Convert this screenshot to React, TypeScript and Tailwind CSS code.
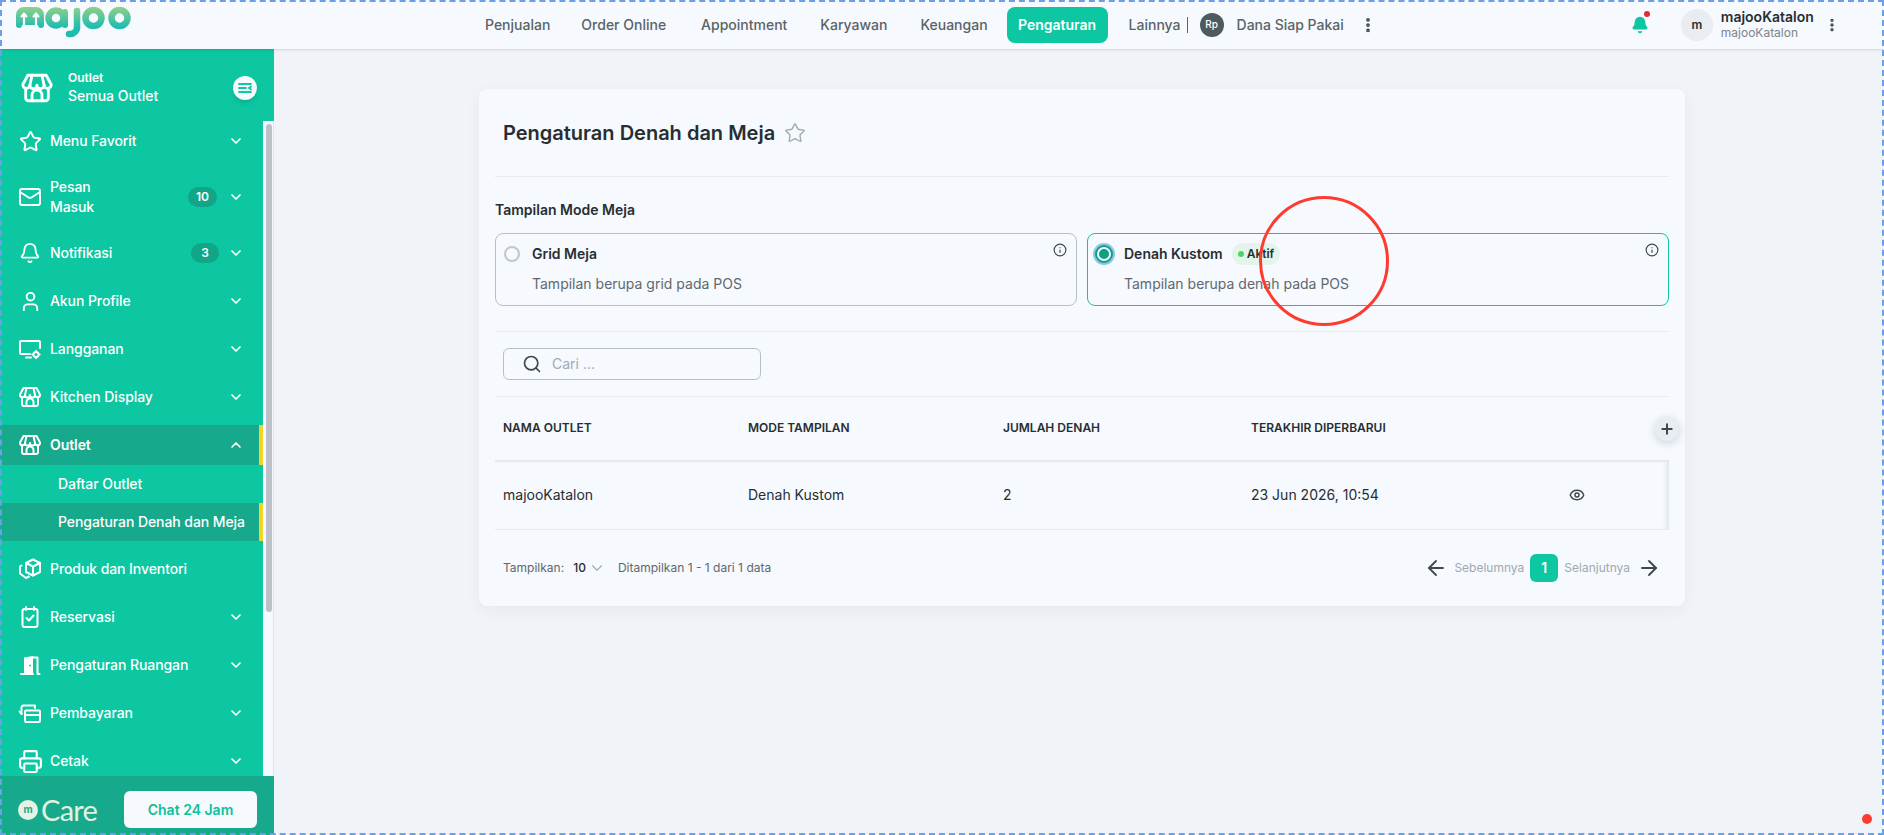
import { useState } from 'react'
import {
    Star, Mail, Bell, User, ChevronDown, ChevronUp, Search, Info, Eye, Plus,
    ArrowLeft, ArrowRight, EllipsisVertical, Printer,
} from 'lucide-react'

const navItems = [
    { label: 'Penjualan', offset: '' },
    { label: 'Order Online', offset: '-ml-[2px]' },
    { label: 'Appointment', offset: 'ml-[2px]' },
    { label: 'Karyawan', offset: '' },
    { label: 'Keuangan', offset: '' },
]

function Logo() {
    return (
        <svg width="118" height="40" viewBox="0 -2 118 40" fill="none" className="shrink-0">
            <defs>
                <linearGradient id="logoGrad" gradientUnits="userSpaceOnUse" x1="0" y1="0" x2="0" y2="20">
                    <stop offset="0" stopColor="#93cf88" />
                    <stop offset="1" stopColor="#1fbdb0" />
                </linearGradient>
            </defs>
            <path d="M1 18V8a8 8 0 0 1 8-8h12a8 8 0 0 1 8 8v10a3 3 0 0 1-6 0h-16a3 3 0 0 1-6 0z" fill="url(#logoGrad)" />
            <path d="M9 22V6.5M6.5 9.5 9 6.5l2.5 3M21 22V6.5M18.5 9.5 21 6.5l2.5 3" stroke="#f6f9fe" strokeWidth="2.2" strokeLinecap="round" strokeLinejoin="round" />
            <g stroke="url(#logoGrad)" strokeLinecap="round" strokeLinejoin="round">
                <circle cx="41" cy="11" r="7.5" strokeWidth="6.5" />
                <path d="M50 5v13" strokeWidth="6" />
                <path d="M62 4v15a7 7 0 0 1-8 8" strokeWidth="6.5" />
                <circle cx="78.5" cy="11" r="8" strokeWidth="6.5" />
                <circle cx="104.5" cy="11" r="8" strokeWidth="6.5" />
            </g>
        </svg>
    )
}

function StoreIcon({ size = 24 }: { size?: number }) {
    return (
        <svg width={size} height={size} viewBox="0 0 24 24" fill="none" stroke="currentColor" strokeWidth="2" strokeLinecap="round" strokeLinejoin="round" className="shrink-0">
            <path d="M5.5 3h13l3.5 6.5a2.5 2.5 0 0 1-5 .5 2.5 2.5 0 0 1-5 0 2.5 2.5 0 0 1-5 0 2.5 2.5 0 0 1-5-.5z" />
            <path d="M8.5 3 7 10M15.5 3 17 10" />
            <path d="M4 12.5V19a2 2 0 0 0 2 2h12a2 2 0 0 0 2-2v-6.5" />
            <path d="M8.5 21v-4a3.5 3.5 0 0 1 7 0v4" />
        </svg>
    )
}

function MonitorGearIcon() {
    return (
        <svg width="24" height="24" viewBox="0 0 24 24" fill="none" stroke="currentColor" strokeWidth="2" strokeLinecap="round" strokeLinejoin="round" className="shrink-0">
            <path d="M22 11V5a1 1 0 0 0-1-1H3a1 1 0 0 0-1 1v11a1 1 0 0 0 1 1h9" />
            <path d="M8 20.5h5" />
            <circle cx="18" cy="17.5" r="2.6" />
            <path d="M18 13.5v1M18 20.5v1M14 17.5h1M21 17.5h1" strokeWidth="1.6" />
        </svg>
    )
}

function CubeIcon() {
    return (
        <svg width="24" height="24" viewBox="0 0 24 24" fill="none" stroke="currentColor" strokeWidth="2" strokeLinecap="round" strokeLinejoin="round" className="shrink-0">
            <path d="M15 2.5 22 6v9l-7 3.5L8 15V6z" />
            <path d="M8 6l7 3.5L22 6M15 9.5v9" />
            <path d="M3.5 8.5 2 9.5v7l6 4.5 3-1.5" />
        </svg>
    )
}

function ReservasiIcon() {
    return (
        <svg width="24" height="24" viewBox="0 0 24 24" fill="none" stroke="currentColor" strokeWidth="2" strokeLinecap="round" strokeLinejoin="round" className="shrink-0">
            <rect x="4.5" y="4" width="15" height="18" rx="2" />
            <path d="M8 2v3M16 2v3" />
            <path d="M8.5 13l2.5 2.5 4.5-5" />
        </svg>
    )
}

function DoorIcon() {
    return (
        <svg width="24" height="24" viewBox="0 0 24 24" fill="none" className="shrink-0">
            <path d="M6 21V4.5L15 3v18z" fill="currentColor" />
            <path d="M15 4.5h4.5V21h2M3 21h12" stroke="currentColor" strokeWidth="2" strokeLinecap="round" strokeLinejoin="round" />
            <circle cx="12" cy="12.5" r="0.9" fill="#0cc7a1" />
        </svg>
    )
}

function PaymentIcon() {
    return (
        <svg width="24" height="24" viewBox="0 0 24 24" fill="none" stroke="currentColor" strokeWidth="2" strokeLinecap="round" strokeLinejoin="round" className="shrink-0">
            <rect x="7" y="9.5" width="15" height="11.5" rx="1" />
            <path d="M7 14h15" />
            <path d="M3.5 13V6.5a2 2 0 0 1 2-2H17v2.5" />
            <path d="M1.5 10.5 3.5 13" />
        </svg>
    )
}

function MenuRow({ icon, label, badge, open, active, noChevron, tall }: {
    icon: React.ReactNode
    label: string
    badge?: string
    open?: boolean
    active?: boolean
    noChevron?: boolean
    tall?: boolean
}) {
    return (
        <div className={`flex items-center pl-5 shrink-0 ${tall ? 'h-14' : 'h-10'} ${active ? 'bg-[#17a98b] border-r-4 border-[#f4d423] pr-[14px]' : 'pr-[18px]'}`}>
            <div className="w-5 h-5 flex items-center justify-center text-white shrink-0">{icon}</div>
            <span className={`ml-[10px] text-sm leading-5 tracking-[-0.08px] text-white flex-1 ${active ? 'font-semibold' : 'font-medium'} ${tall ? 'max-w-[60px]' : ''}`}>{label}</span>
            {tall && <span className="flex-1" />}
            {badge && (
                <span className={`h-5 px-2 min-w-7 rounded-full bg-[#10a687] text-white text-xs font-semibold flex items-center justify-center ${badge === '3' ? 'mr-[8px]' : 'mr-[10px]'}`}>{badge}</span>
            )}
            {!noChevron && (open
                ? <ChevronUp size={16} strokeWidth={2.5} className="ml-[1px] mr-[1px] text-white shrink-0" />
                : <ChevronDown size={16} strokeWidth={2.5} className="ml-[1px] mr-[1px] text-white shrink-0" />)}
        </div>
    )
}

function Sidebar() {
    return (
        <aside className="w-[274px] shrink-0 bg-[#0cc7a1] flex flex-col overflow-hidden relative">
            <div className="h-[72px] shrink-0 flex items-center pt-[6px] pl-5 pr-[17px]">
                <span className="text-white"><StoreIcon size={34} /></span>
                <div className="ml-[14px] flex-1 text-white">
                    <div className="text-xs font-semibold leading-4">Outlet</div>
                    <div className="text-sm font-medium leading-5">Semua Outlet</div>
                </div>
                <div className="w-6 h-6 rounded-full bg-[#f6f9fe] shadow-md flex items-center justify-center">
                    <svg width="14" height="12" viewBox="0 0 14 12" fill="none" stroke="#0cc7a1" strokeWidth="1.8" strokeLinecap="round">
                        <path d="M1 2h12M1 6h7M1 10h12M13 4.5 11 6l2 1.5" />
                    </svg>
                </div>
            </div>
            <div className="flex-1 flex min-h-0">
                <nav className="w-[263px] shrink-0 flex flex-col gap-2 overflow-hidden">
                    <MenuRow icon={<Star size={23} className="shrink-0" />} label="Menu Favorit" />
                    <MenuRow icon={<Mail size={24} className="shrink-0" />} label="Pesan Masuk" badge="10" tall />
                    <MenuRow icon={<Bell size={22} className="shrink-0" />} label="Notifikasi" badge="3" />
                    <MenuRow icon={<User size={23} className="shrink-0" />} label="Akun Profile" />
                    <MenuRow icon={<MonitorGearIcon />} label="Langganan" />
                    <MenuRow icon={<StoreIcon />} label="Kitchen Display" />
                    <div className="shrink-0">
                        <MenuRow icon={<StoreIcon />} label="Outlet" open active />
                        <div className="h-[38px] pl-[58px] flex items-center text-sm font-medium tracking-[-0.08px] text-white">Daftar Outlet</div>
                        <div className="h-[38px] pl-[58px] flex items-center text-sm font-medium tracking-[-0.08px] text-white bg-[#17a98b] border-r-4 border-[#f4d423]">Pengaturan Denah dan Meja</div>
                    </div>
                    <MenuRow icon={<CubeIcon />} label="Produk dan Inventori" noChevron />
                    <MenuRow icon={<ReservasiIcon />} label="Reservasi" />
                    <MenuRow icon={<DoorIcon />} label="Pengaturan Ruangan" />
                    <MenuRow icon={<PaymentIcon />} label="Pembayaran" />
                    <MenuRow icon={<Printer size={25} className="shrink-0" />} label="Cetak" />
                </nav>
                <div className="flex-1 bg-[#f6f9fe] border-r border-[#dfe3ea] pl-[3px] pt-[3px]">
                    <div className="w-[6px] h-[488px] rounded-full bg-[#bcc1c9]" />
                </div>
            </div>
            <div className="h-[59px] shrink-0 bg-[#17a98b] flex items-center pt-2 pl-[18px] pr-[17px]">
                <span className="w-5 h-5 rounded-full bg-[#e6f2e4] flex items-center justify-center text-[10px] font-bold text-[#17a98b]">m</span>
                <span className="ml-[3px] flex-1 text-[29px] leading-none tracking-tight text-[#e3f1e1] font-['Lato']">Care</span>
                <button className="w-[133px] h-[37px] rounded-md bg-[#f6f9fe] text-sm font-semibold text-[#0fbf9b]">Chat 24 Jam</button>
            </div>
        </aside>
    )
}

function ModeCard({ title, desc, active }: { title: string; desc: string; active?: boolean }) {
    return (
        <div className={`relative flex-1 h-[73px] rounded-lg border bg-[#f6f9fe] ${active ? 'border-[#0cc7a1]' : 'border-[#b9bfc6]'}`}>
            <div className="absolute right-[9px] top-[9px] text-[#40484c]"><Info size={14} /></div>
            <div className={`flex items-center h-10 ${active ? 'pl-[5px]' : 'pl-2'}`}>
                {active ? (
                    <span className="w-[22px] h-[22px] rounded-full bg-[#8cc8e4] flex items-center justify-center">
                        <span className="w-[18px] h-[18px] rounded-full bg-[#f6f9fe] border-2 border-[#0e9f85] flex items-center justify-center">
                            <span className="w-[10px] h-[10px] rounded-full bg-[#0e9f85]" />
                        </span>
                    </span>
                ) : (
                    <span className="w-4 h-4 rounded-full border-2 border-[#c2c7cc]" />
                )}
                <span className={`text-sm font-semibold text-[#272e32] ${active ? 'ml-[9px]' : 'ml-3'}`}>{title}</span>
                {active && (
                    <span className="ml-[9px] h-[22px] w-[48px] rounded-full bg-[#e3f5ea] flex items-center pl-[6px] text-xs font-semibold text-[#272e32]">
                        <span className="w-[6px] h-[6px] rounded-full bg-[#4fd26b] mr-[3px]" />Aktif
                    </span>
                )}
            </div>
            <div className="pl-9 text-sm leading-5 text-[#5f686c]">{desc}</div>
        </div>
    )
}

export default function App() {
    const [page] = useState(1)
    return (
        <div className="relative w-[1884px] h-[835px] overflow-hidden bg-[#f0f3f8] font-['Inter',sans-serif] flex flex-col">
            <header className="relative z-10 h-[49px] shrink-0 bg-[#f6f9fe] shadow-sm flex items-center pl-[15px]">
                <Logo />
                <div className="ml-[340px] flex items-center gap-[9px]">
                    {navItems.map((item) => (
                        <span key={item.label} className={`h-9 px-3 flex items-center text-sm font-medium text-[#5a6367] ${item.offset}`}>{item.label}</span>
                    ))}
                    <span className="-ml-[2px] h-9 w-[101px] rounded-lg bg-[#0cc7a1] text-white text-sm font-semibold flex items-center justify-center">Pengaturan</span>
                </div>
                <span className="ml-[21px] text-sm font-medium text-[#5a6367]">Lainnya</span>
                <span className="ml-[6px] w-[1px] h-4 bg-[#5a6367]" />
                <span className="ml-3 w-6 h-6 rounded-full bg-[#4f5a5e] text-white text-[10px] font-medium flex items-center justify-center">Rp</span>
                <span className="ml-[13px] text-sm font-medium text-[#5a6367]">Dana Siap Pakai</span>
                <EllipsisVertical size={18} strokeWidth={3} className="ml-[15px] text-[#40484c]" />
                <div className="relative ml-[254px] w-[18px] h-[18px]">
                    <Bell size={18} fill="#0cc7a1" stroke="#0cc7a1" />
                    <span className="absolute -right-[1px] -top-[5px] w-[6px] h-[6px] rounded-full bg-[#e5283c]" />
                </div>
                <span className="ml-[32px] w-8 h-8 rounded-full bg-[#e9ecf1] text-[#272e32] text-xs font-semibold flex items-center justify-center">m</span>
                <div className="ml-2 w-[93px]">
                    <div className="text-sm font-semibold leading-4 text-[#272e32]">majooKatalon</div>
                    <div className="text-xs leading-4 text-[#7d858a]">majooKatalon</div>
                </div>
                <EllipsisVertical size={16} strokeWidth={3} className="ml-[10px] text-[#40484c]" />
            </header>

            <div className="flex-1 flex min-h-0">
                <Sidebar />
                <main className="flex-1 pt-10 pl-[205px]">
                    <div className="relative w-[1206px] h-[517px] rounded-lg bg-[#f6f9fe] shadow-[0_4px_16px_rgba(40,50,70,0.05)] px-4">
                        <div className="h-[88px] pl-2 flex items-center border-b border-[#e6e9ee]">
                            <h1 className="text-xl font-semibold text-[#272e32]">Pengaturan Denah dan Meja</h1>
                            <Star size={22} strokeWidth={1.5} className="ml-[9px] text-[#a2a9ae]" />
                        </div>

                        <div className="h-[155px] pt-6 border-b border-[#e6e9ee]">
                            <div className="text-sm font-semibold leading-[18px] text-[#272e32]">Tampilan Mode Meja</div>
                            <div className="mt-[14px] flex gap-[10px]">
                                <ModeCard title="Grid Meja" desc="Tampilan berupa grid pada POS" />
                                <ModeCard title="Denah Kustom" desc="Tampilan berupa denah pada POS" active />
                            </div>
                        </div>

                        <div className="h-[65px] pl-2 flex items-center border-b border-[#e6e9ee]">
                            <div className="w-[258px] h-8 rounded-md border border-[#b9bfc6] flex items-center pl-[18px]">
                                <Search size={20} className="text-[#40484c]" />
                                <span className="ml-[10px] text-sm text-[#a2a9ae]">Cari ...</span>
                            </div>
                        </div>

                        <div className="h-[65px] pl-2 pb-[1px] flex items-center border-b-2 border-[#e6e9ee] text-xs font-semibold text-[#272e32]">
                            <span className="w-[245px]">NAMA OUTLET</span>
                            <span className="w-[255px]">MODE TAMPILAN</span>
                            <span className="w-[248px]">JUMLAH DENAH</span>
                            <span>TERAKHIR DIPERBARUI</span>
                        </div>
                        <div className="h-[68px] pl-2 pb-[2px] flex items-center border-b border-[#e6e9ee] text-sm text-[#272e32] shadow-[inset_-5px_0_5px_-3px_rgba(40,50,70,0.12)]">
                            <span className="w-[245px]">majooKatalon</span>
                            <span className="w-[255px]">Denah Kustom</span>
                            <span className="w-[248px]">2</span>
                            <span className="w-[318px]">23 Jun 2026, 10:54</span>
                            <Eye size={16} strokeWidth={2.2} className="text-[#40484c]" />
                        </div>

                        <div className="h-[75px] pl-2 pr-2 flex items-center text-xs text-[#5f686c]">
                            <span>Tampilkan:</span>
                            <span className="ml-[9px] font-medium text-[#272e32]">10</span>
                            <ChevronDown size={18} strokeWidth={1.5} className="ml-[2px] text-[#a2a9ae]" />
                            <span className="ml-[12px]">Ditampilkan 1 - 1 dari 1 data</span>
                            <span className="flex-1" />
                            <ArrowLeft size={24} strokeWidth={1.8} className="text-[#40484c]" />
                            <span className="ml-[6px] text-[#a2a9ae]">Sebelumnya</span>
                            <span className="ml-[6px] w-7 h-7 rounded-md bg-[#0cc7a1] text-white text-sm font-semibold flex items-center justify-center">{page}</span>
                            <span className="ml-[6px] text-[#a2a9ae]">Selanjutnya</span>
                            <ArrowRight size={24} strokeWidth={1.8} className="ml-[7px] text-[#40484c]" />
                        </div>

                        {/* tombol tambah kolom */}
                        <div className="absolute left-[1176px] top-[328px] w-6 h-6 rounded-full bg-[#e9ecf1] shadow-[0_2px_8px_rgba(40,50,70,0.2)] flex items-center justify-center text-[#40484c]">
                            <Plus size={16} strokeWidth={3} />
                        </div>
                        {/* lingkaran anotasi */}
                        <div className="absolute left-[780px] top-[107px] w-[130px] h-[130px] rounded-full border-[3px] border-[#ff3b30]" />
                    </div>
                </main>
            </div>

            <span className="absolute left-[1862px] top-[814px] w-[10px] h-[10px] rounded-full bg-[#ff3b30]" />
            <div className="pointer-events-none absolute inset-0 z-20 border-2 border-dashed border-[#6ba0e8]" />
        </div>
    )
}
